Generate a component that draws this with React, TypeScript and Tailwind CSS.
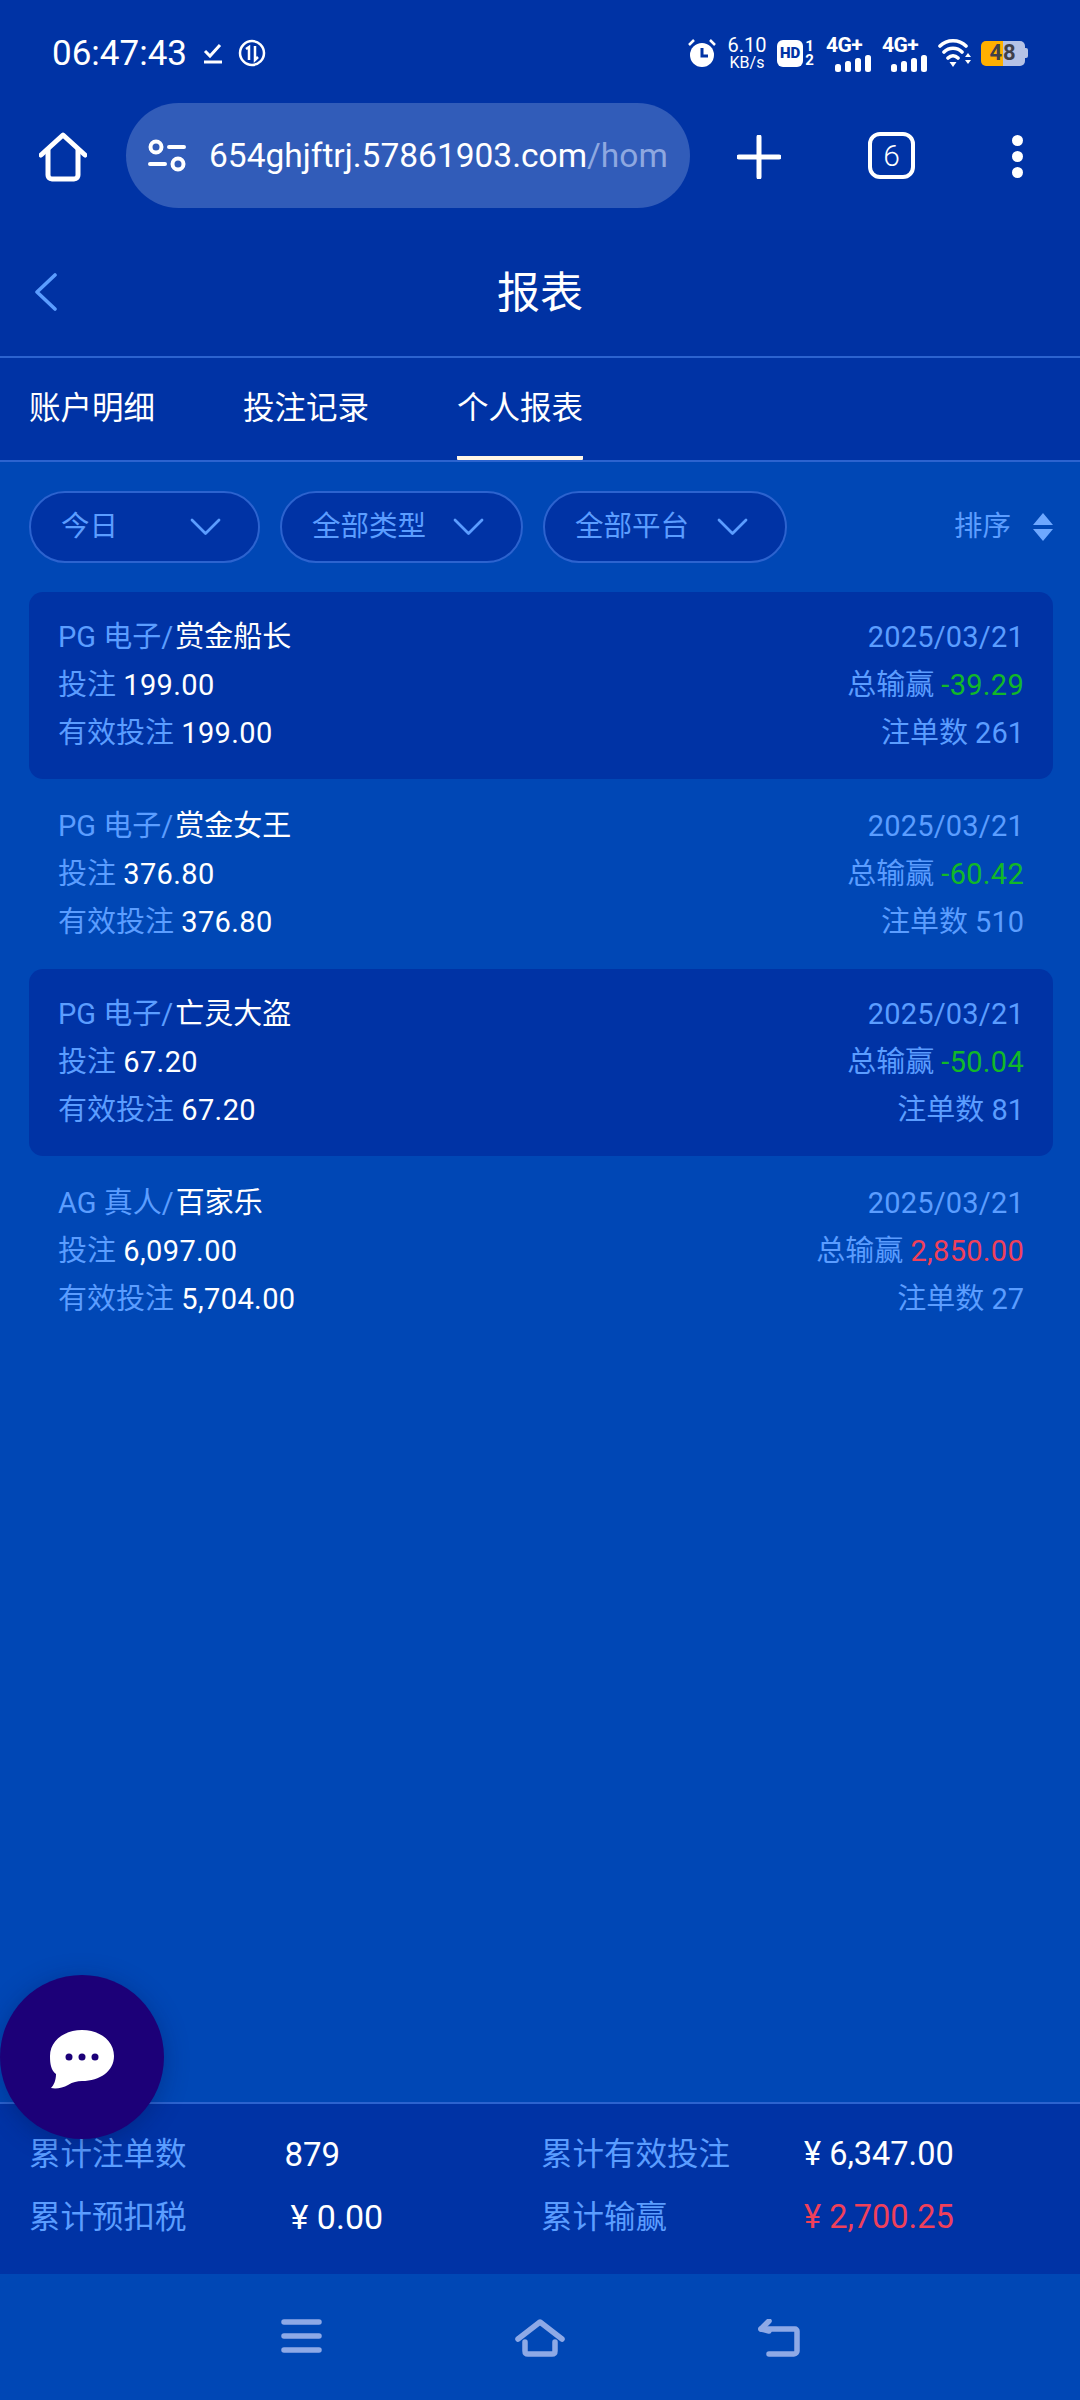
import React from 'react';

const records = [
  { source: 'PG 电子/', game: '赏金船长', bet: '199.00', valid: '199.00', date: '2025/03/21', win: '-39.29', count: '261', dark: true },
  { source: 'PG 电子/', game: '赏金女王', bet: '376.80', valid: '376.80', date: '2025/03/21', win: '-60.42', count: '510', dark: false },
  { source: 'PG 电子/', game: '亡灵大盗', bet: '67.20', valid: '67.20', date: '2025/03/21', win: '-50.04', count: '81', dark: true },
  { source: 'AG 真人/', game: '百家乐', bet: '6,097.00', valid: '5,704.00', date: '2025/03/21', win: '2,850.00', count: '27', dark: false },
];

const filters = [
  { label: '今日', width: 'w-[231px]' },
  { label: '全部类型', width: 'w-[243px]' },
  { label: '全部平台', width: 'w-[244px]' },
];

const Signal = () => (
  <div className="flex w-[45px] flex-col">
    <span className="text-[21px] leading-[20px] font-bold tracking-[-0.5px] text-white">4G+</span>
    <svg width="36" height="17" viewBox="0 0 36 17" className="self-end" fill="#fff">
      <rect x="0" y="9" width="6" height="8" rx="2.5" />
      <rect x="10" y="6" width="6" height="11" rx="2.5" />
      <rect x="20" y="3" width="6" height="14" rx="2.5" />
      <rect x="30" y="0" width="6" height="17" rx="2.5" />
    </svg>
  </div>
);

const StatusBar = () => (
  <div className="flex h-[103px] items-center pt-[3px] pr-[52px] pl-[52px] text-white">
    <span className="text-[35px] leading-none">06:47:43</span>
    <svg width="20" height="22" viewBox="0 0 20 22" className="ml-[16px]" fill="none" stroke="#fff" strokeWidth="3">
      <path d="M2 9l5 5L17 3" />
      <path d="M1 20h18" />
    </svg>
    <svg width="28" height="28" viewBox="0 0 28 28" className="ml-[15px]" fill="none" stroke="#fff" strokeWidth="2.5">
      <circle cx="14" cy="14" r="12" />
      <path d="M11 21V8L8 10M17 7v14l3-3" />
    </svg>

    <div className="ml-auto flex items-center">
      <svg width="28" height="28" viewBox="0 0 28 28" fill="#fff">
        <path d="M1 6l5-5M27 6l-5-5" stroke="#fff" strokeWidth="2.5" />
        <circle cx="14" cy="16" r="12" />
        <path d="M14 9v8h6" fill="none" stroke="#0033a5" strokeWidth="3" />
      </svg>
      <div className="ml-[12px] flex w-[38px] flex-col items-center">
        <span className="text-[20px] leading-[19px]">6.10</span>
        <span className="text-[16px] leading-[16px]">KB/s</span>
      </div>
      <div className="ml-[11px] flex h-[27px] w-[26px] items-center justify-center rounded-[6px] bg-white text-[15px] leading-none font-black text-[#0033a5]">HD</div>
      <div className="ml-[1px] flex w-[11px] flex-col items-center text-[15px] leading-[14px] font-bold">
        <span>1</span>
        <span>2</span>
      </div>
      <div className="ml-[11px]"><Signal /></div>
      <div className="ml-[11px]"><Signal /></div>
      <svg width="33" height="30" viewBox="0 0 33 30" className="ml-[11px]" fill="none" stroke="#fff" strokeWidth="3.6" strokeLinecap="round">
        <path d="M2 8c7-7 19-7 26 0M6 14c5-5 13-5 18 0M10 20c3-3 7-3 10 0" />
        <path d="M11.5 24h7l-3.500 5z" fill="#fff" stroke="none" />
        <path d="M27 19h6l-3-4zM27 22h6l-3 4z" fill="#fff" stroke="none" />
      </svg>
      <div className="ml-[10px] flex items-center">
        <div className="flex h-[25px] w-[44px] items-center justify-center rounded-[5px] bg-[linear-gradient(90deg,#ffb000_50%,#b5c2e6_50%)] text-[22px] leading-none font-bold tracking-[1px] text-[#3f3f4a]">48</div>
        <div className="h-[10px] w-[3px] rounded-r-[2px] bg-[#b5c2e6]" />
      </div>
    </div>
  </div>
);

const BrowserBar = () => (
  <div className="flex h-[127px] items-start text-white">
    <svg width="48" height="50" viewBox="0 0 48 50" className="mt-[29px] ml-[39px]" fill="none" stroke="#fff" strokeWidth="5" strokeLinecap="round" strokeLinejoin="round">
      <path d="M2 23L24 3l22 20" />
      <path d="M9 18v25c0 2 1 4 4 4h22c3 0 4-2 4-4V18" />
    </svg>
    <div className="ml-[39px] flex h-[105px] w-[564px] items-center overflow-hidden rounded-full bg-[#315cb9] pr-[10px] pl-[22px]">
      <svg width="38" height="34" viewBox="0 0 38 34" className="shrink-0" fill="none" stroke="#fff" strokeWidth="4" strokeLinecap="round">
        <circle cx="8" cy="8" r="5.5" />
        <path d="M21 8h15M2 25h15" />
        <circle cx="30" cy="25" r="5.5" />
      </svg>
      <span className="ml-[23px] text-[33.500px] leading-none whitespace-nowrap">
        654ghjftrj.57861903.com<span className="text-[#8ea8e0]">/hom</span>
      </span>
    </div>
    <svg width="44" height="44" viewBox="0 0 44 44" className="mt-[32px] ml-[47px]" fill="none" stroke="#fff" strokeWidth="5" strokeLinecap="round">
      <path d="M22 2v40M2 22h40" />
    </svg>
    <div className="mt-[29px] ml-[87px] flex h-[47px] w-[47px] items-center justify-center rounded-[12px] border-[4px] border-white text-[30px] leading-none font-light">6</div>
    <div className="mt-[32px] ml-[97px] flex flex-col gap-[5px]">
      <div className="h-[11px] w-[11px] rounded-full bg-white" />
      <div className="h-[11px] w-[11px] rounded-full bg-white" />
      <div className="h-[11px] w-[11px] rounded-full bg-white" />
    </div>
  </div>
);

const RecordRow = ({ source, game, bet, valid, date, win, count, dark }: (typeof records)[number]) => (
  <div className={`mb-[1.5px] flex h-[187px] justify-between rounded-[14px] px-[29px] pt-[21px] text-[29px] leading-[48px] text-[#5b9dff] ${dark ? 'bg-[#0033a5]' : ''}`}>
    <div className="flex flex-col">
      <div>{source}<span className="ml-[2px] text-white">{game}</span></div>
      <div>投注 <span className="tracking-[0.4px] text-white">{bet}</span></div>
      <div>有效投注 <span className="tracking-[0.4px] text-white">{valid}</span></div>
    </div>
    <div className="flex flex-col items-end">
      <div className="tracking-[0.2px]">{date}</div>
      <div>总输赢 <span className={`tracking-[0.3px] ${win.startsWith('-') ? 'text-[#12b828]' : 'text-[#f0405a]'}`}>{win}</span></div>
      <div>注单数 {count}</div>
    </div>
  </div>
);

const NavBar = () => (
  <div className="flex h-[126px] items-start justify-center gap-[193px] pt-[45px]">
    <svg width="41" height="34" viewBox="0 0 41 34" fill="none" stroke="#8ea9e6" strokeWidth="5.5" strokeLinecap="round">
      <path d="M3 3h35M3 17h35M3 31h35" />
    </svg>
    <svg width="50" height="38" viewBox="0 0 50 38" fill="none" stroke="#8ea9e6" strokeWidth="5.5" strokeLinecap="round" strokeLinejoin="round">
      <path d="M3 20L25 3l22 17" />
      <path d="M10 23v9c0 2 1 3 3 3h24c2 0 3-1 3-3v-9" />
    </svg>
    <svg width="42" height="38" viewBox="0 0 42 38" fill="none" stroke="#8ea9e6" strokeWidth="5.5" strokeLinecap="round" strokeLinejoin="round">
      <path d="M3 10h34c1 0 2 1 2 2v20c0 1-1 3-3 3H11" />
      <path d="M11 2L3 10l8 2" />
    </svg>
  </div>
);

export default function App() {
  return (
    <div className="relative flex h-[2400px] w-[1080px] flex-col overflow-hidden bg-[#0047b5] font-['Roboto','Noto_Sans_CJK_SC',sans-serif]">
      <div className="bg-[#0033a5]">
        <StatusBar />
        <BrowserBar />

        {/* Page title */}
        <div className="relative flex h-[128px] items-center justify-center border-b-2 border-[#2c63cf] bg-[#0032a3]">
          <svg width="24" height="38" viewBox="0 0 24 38" className="absolute top-[43px] left-[34px]" fill="none" stroke="#5b9dff" strokeWidth="3.6" strokeLinecap="round" strokeLinejoin="round">
            <path d="M21 2L3 19l18 17" />
          </svg>
          <h1 className="text-[43px] leading-none font-normal text-white">报表</h1>
        </div>

        {/* Tabs */}
        <div className="flex h-[104px] gap-[88px] border-b-2 border-[#2c63cf] pl-[29px] text-[31.500px] leading-none text-white">
          <div className="flex items-center border-b-4 border-transparent pt-[4px]">账户明细</div>
          <div className="flex items-center border-b-4 border-transparent pt-[4px]">投注记录</div>
          <div className="flex items-center rounded-b-[1px] border-b-4 border-[#fff6e6] pt-[4px]">个人报表</div>
        </div>
      </div>

      <div className="flex-1 pt-[29px] pr-[27px] pl-[29px]">
        <div className="flex items-center">
          <div className="flex gap-[20px]">
            {filters.map(f => (
              <div key={f.label} className={`flex h-[72px] items-center justify-between rounded-full border-2 border-[#2c63cf] bg-[#0033a5] pr-[37px] pl-[30px] text-[28.5px] leading-none text-[#5b9dff] ${f.width}`}>
                <span>{f.label}</span>
                <svg width="31" height="18" viewBox="0 0 31 18" fill="none" stroke="#5b9dff" strokeWidth="2.8" strokeLinecap="round" strokeLinejoin="round">
                  <path d="M2 2l13.500 13.500L29 2" />
                </svg>
              </div>
            ))}
          </div>
          <span className="ml-auto text-[28.5px] leading-none text-[#5b9dff]">排序</span>
          <svg width="20" height="28" viewBox="0 0 20 28" className="ml-[22px]" fill="#6ea8ff">
            <path d="M10 0l10 12H0zM0 16h20L10 28z" />
          </svg>
        </div>

        <div className="mt-[29px] flex flex-col">
          {records.map(r => <RecordRow key={r.game} {...r} />)}
        </div>
      </div>

      {/* Totals */}
      <div className="grid h-[172px] grid-cols-[512px_1fr] content-start border-t-2 border-[#2c63cf] bg-[#0033a5] pt-[19px] pl-[29px] text-[31.5px] leading-[63px]">
        <div className="flex text-[#5b9dff]">累计注单数<span className="ml-[98px] text-[33px] text-white">879</span></div>
        <div className="flex text-[#5b9dff]"><span className="w-[263px]">累计有效投注</span><span className="text-[32.500px] text-white">¥ 6,347.00</span></div>
        <div className="flex text-[#5b9dff]">累计预扣税<span className="ml-[104px] text-[34px] text-white">¥ 0.00</span></div>
        <div className="flex text-[#5b9dff]"><span className="w-[263px]">累计输赢</span><span className="text-[32.500px] text-[#f0405a]">¥ 2,700.25</span></div>
      </div>

      <NavBar />

      {/* Chat button floats over the totals */}
      <div className="absolute top-[1975px] left-0 flex h-[164px] w-[164px] items-center justify-center rounded-full bg-[#1c0078] pt-[4px] shadow-[0_4px_24px_rgba(0,20,80,0.35)]">
        <svg width="66" height="60" viewBox="0 0 66 60">
          <path d="M33 1c18 0 32 11 32 26S51 52 33 52c-5 0-9 1-14 4-5 3-12 4-17 3 3-3 5-8 5-14C2 41 1 35 1 27 1 12 15 1 33 1z" fill="#fff" />
          <circle cx="20" cy="28" r="3.5" fill="#1c0078" />
          <circle cx="33" cy="28" r="3.5" fill="#1c0078" />
          <circle cx="46" cy="28" r="3.5" fill="#1c0078" />
        </svg>
      </div>
    </div>
  );
}
